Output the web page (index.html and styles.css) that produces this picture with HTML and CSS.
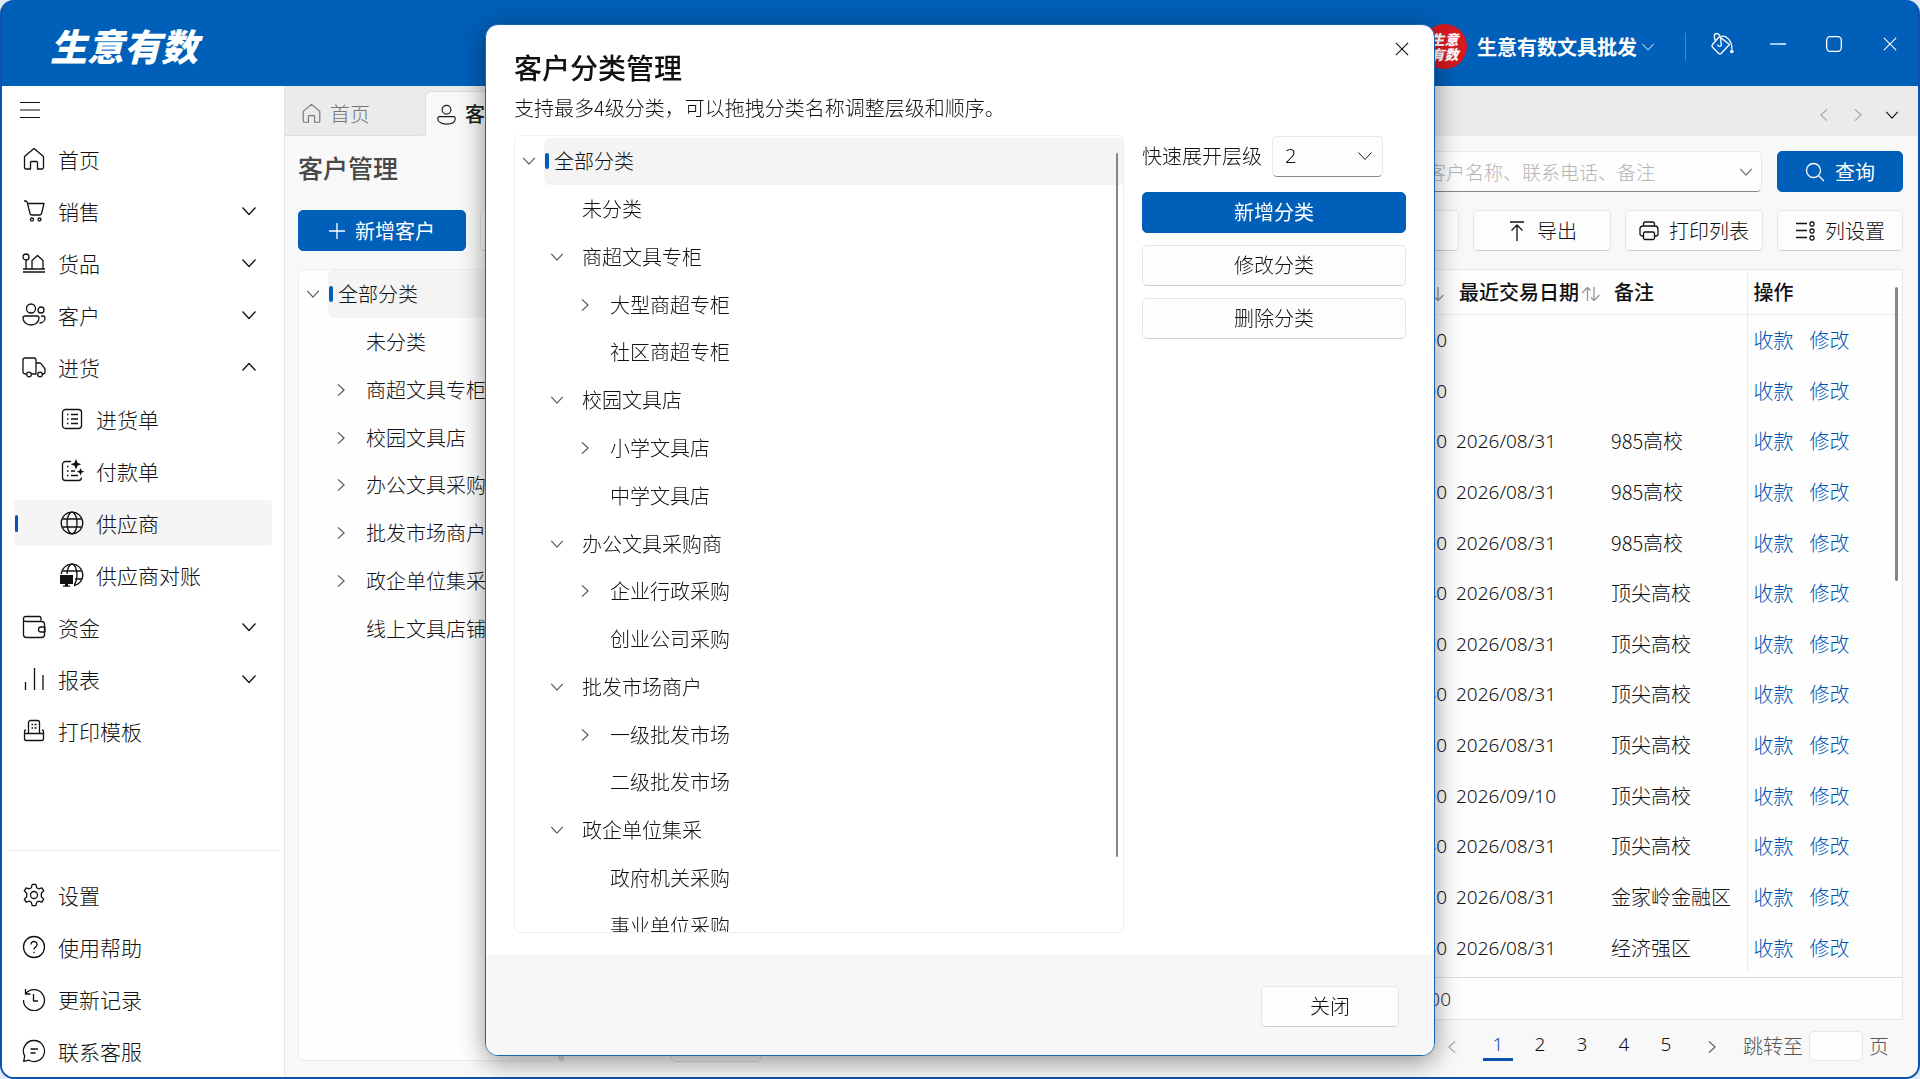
FILE: index.html
```html
<!DOCTYPE html>
<html lang="zh-CN">
<head>
    <meta charset="UTF-8">
    <meta name="viewport" content="width=device-width, initial-scale=1.0">
    <title>客户分类管理</title>
    <link rel="stylesheet" href="styles.css">
</head>
<body>
<svg class="sprite" aria-hidden="true">
    <symbol id="i-menu" viewBox="0 0 24 24"><path d="M2 4.500h20M2 12h20M2 19.500h20"/></symbol>
    <symbol id="i-home" viewBox="0 0 24 24"><path d="M2.500 9.500 12 1.500l9.500 8V20.500a1.500 1.500 0 0 1-1.500 1.500h-4.500v-6.500a1 1 0 0 0-1-1h-5a1 1 0 0 0-1 1V22H4a1.500 1.500 0 0 1-1.500-1.500z"/></symbol>
    <symbol id="i-cart" viewBox="0 0 24 24"><path d="M2 2h1.500c1 0 1.500.7 1.800 1.700L8 14.500c.3 1 1 1.500 2 1.500h7.500c1 0 1.700-.5 2-1.500L22 4.500H5.500"/><circle cx="10" cy="20.500" r="1.500"/><circle cx="17.500" cy="20.500" r="1.500"/></symbol>
    <symbol id="i-goods" viewBox="0 0 24 24"><circle cx="4" cy="6" r="3"/><path d="M4 9v9M1 18h22M1 21h22M10 18v-8.500l5.500-5 5.500 5V18"/></symbol>
    <symbol id="i-users" viewBox="0 0 24 24"><circle cx="9" cy="5.500" r="4.500"/><circle cx="19" cy="7" r="3"/><path d="M3 13h12a2 2 0 0 1 2 2c0 4-3.500 7-8 7s-8-3-8-7a2 2 0 0 1 2-2zM19 13h2.500a2 2 0 0 1 1.500 2c0 3-2.500 5-5.500 5"/></symbol>
    <symbol id="i-user" viewBox="0 0 24 24"><circle cx="12" cy="6.500" r="5"/><path d="M4 14.500h16a2 2 0 0 1 2 2c0 4-4 6.500-10 6.500S2 20.500 2 16.500a2 2 0 0 1 2-2z"/></symbol>
    <symbol id="i-truck" viewBox="0 0 24 24"><path d="M4.500 19H3a2 2 0 0 1-2-2V5a2 2 0 0 1 2-2h9a2 2 0 0 1 2 2v14H9.500M14 8h3.500a2 2 0 0 1 1.500.7l3.500 4.500a2 2 0 0 1 .5 1.300V17a2 2 0 0 1-2 2h-1"/><circle cx="7" cy="19.500" r="2.300"/><circle cx="18" cy="19.500" r="2.300"/></symbol>
    <symbol id="i-list" viewBox="0 0 24 24"><rect x="2.500" y="2.500" width="19" height="19" rx="3"/><path d="M7 7.500h1.500M11 7.500h7M7 12h1.500M11 12h7M7 16.500h1.500M11 16.500h7"/></symbol>
    <symbol id="i-pay" viewBox="0 0 24 24"><path d="M11 2.500H5.500a3 3 0 0 0-3 3v13a3 3 0 0 0 3 3h13a3 3 0 0 0 3-3M7 7.500h1.500M7 12h1.500M11 12h4M7 16.500h1.500M11 16.500h7"/><path class="solid" d="m16 0 1.500 3.800 3.800 1.500-3.800 1.500-1.500 3.800-1.500-3.800-3.800-1.500 3.800-1.500zM20.500 9l1.100 2.600 2.600 1.100-2.600 1.100-1.100 2.600-1.100-2.600-2.600-1.100 2.600-1.100z"/></symbol>
    <symbol id="i-globe" viewBox="0 0 24 24"><circle cx="12" cy="12" r="10.800"/><ellipse cx="12" cy="12" rx="5" ry="10.800"/><path d="M2.500 8h19M2.500 16h19"/></symbol>
    <symbol id="i-globe-pc" viewBox="0 0 24 24"><circle cx="12" cy="12" r="10.800"/><ellipse cx="12" cy="12" rx="5" ry="10.800"/><path d="M2.500 8h19M15 16h7"/><path class="mask" d="M0 11h14v13H0z"/><path class="solid" d="M0 12h13v9H0zM5 20h3v3H5zM3 22.500h7v1.300H3z"/></symbol>
    <symbol id="i-wallet" viewBox="0 0 24 24"><path d="M1.500 4v15.500a3 3 0 0 0 3 3h15a3 3 0 0 0 3-3v-10a3 3 0 0 0-3-3H3.500a2 2 0 0 1-2-2V3.500a2 2 0 0 1 2-2H17a2 2 0 0 1 2 2v3M23 12h-4a2.500 2.500 0 0 0 0 5h4z"/></symbol>
    <symbol id="i-chart" viewBox="0 0 24 24"><path d="M3.500 15v8M12.500 1v22M21 8v15"/></symbol>
    <symbol id="i-template" viewBox="0 0 24 24"><path d="M6.500 14.500v-11a2 2 0 0 1 2-2h7a2 2 0 0 1 2 2v11M4 11a1.500 1.500 0 0 0-1.500 1.500v7a2 2 0 0 0 2 2h15a2 2 0 0 0 2-2v-7A1.500 1.500 0 0 0 20 11M2.500 14.500h19M9.500 5.500H11M12.500 5.500h2M9.500 9H11M12.500 9h2"/></symbol>
    <symbol id="i-gear" viewBox="0 0 24 24"><circle cx="12" cy="12" r="3.500"/><path d="M10.200 1.300h3.600l.8 3.400 2 1.100 3.300-1 1.800 3.100L19.300 10.300v3.400l2.400 2.400-1.800 3.100-3.300-1-2 1.100-.8 3.400h-3.600l-.8-3.400-2-1.100-3.300 1-1.800-3.100 2.400-2.400v-3.400L2.300 7.900l1.800-3.100 3.300 1 2-1.100z"/></symbol>
    <symbol id="i-help" viewBox="0 0 24 24"><circle cx="12" cy="12" r="10.500"/><path d="M9 9.500a3 3 0 1 1 4.500 2.600c-1 .6-1.500 1.200-1.500 2.400M12 16.800v1.400"/></symbol>
    <symbol id="i-history" viewBox="0 0 24 24"><path d="M3.500 2v5h5M3.500 7A10.500 10.500 0 1 1 1.500 13M11.500 7v7H16"/></symbol>
    <symbol id="i-chat" viewBox="0 0 24 24"><path d="M12 1.500A10.500 10.500 0 1 1 7 21.200L1.700 22.300 2.700 17A10.500 10.500 0 0 1 12 1.500zM8.500 10h7.500M8.500 14h5"/></symbol>
    <symbol id="i-down" viewBox="0 0 16 16"><path d="m1.500 4.500 6.500 7 6.500-7"/></symbol>
    <symbol id="i-up" viewBox="0 0 16 16"><path d="m1.500 11.500 6.500-7 6.500 7"/></symbol>
    <symbol id="i-right" viewBox="0 0 16 16"><path d="m4.500 1.500 7 6.500-7 6.500"/></symbol>
    <symbol id="i-left" viewBox="0 0 16 16"><path d="m11.500 1.500-7 6.500 7 6.500"/></symbol>
    <symbol id="i-plus" viewBox="0 0 16 16"><path d="M8 0v16M0 8h16"/></symbol>
    <symbol id="i-close" viewBox="0 0 16 16"><path d="m1 1 14 14M15 1 1 15"/></symbol>
    <symbol id="i-min" viewBox="0 0 16 16"><path d="M0 8h16"/></symbol>
    <symbol id="i-max" viewBox="0 0 16 16"><rect x=".7" y=".7" width="14.600" height="14.600" rx="3.500"/></symbol>
    <symbol id="i-bucket" viewBox="0 0 24 24"><path d="M9 5 2.500 12.500a2 2 0 0 0 0 2.700l6 6a2 2 0 0 0 2.800 0l8.200-8.700L9.500 4.700M5.500 9C3.500 5 4 1.500 6.500 1.500c3 0 4.500 4.500 4.500 9.500a2 2 0 1 1-3.500 1.500M11 4.500c5-2 11 4 11 13"/><circle class="solid" cx="21.800" cy="19.500" r="1.800"/></symbol>
    <symbol id="i-search" viewBox="0 0 20 20"><circle cx="8.500" cy="8.500" r="7"/><path d="m13.500 13.500 5.500 5.500"/></symbol>
    <symbol id="i-export" viewBox="0 0 20 20"><path d="M3 1h14M10 20V4M4.500 9.500 10 4l5.500 5.500"/></symbol>
    <symbol id="i-print" viewBox="0 0 20 20"><path d="M4.500 15H3a2 2 0 0 1-2-2V8a3 3 0 0 1 3-3h12a3 3 0 0 1 3 3v5a2 2 0 0 1-2 2h-1.500M4.500 5V3a2 2 0 0 1 2-2h7a2 2 0 0 1 2 2v2"/><rect x="4.500" y="11" width="11" height="7.500" rx="1.500"/></symbol>
    <symbol id="i-columns" viewBox="0 0 20 20"><path d="M1 2.500h11M1 9.500h11M1 16.500h11"/><rect x="15" y="1" width="4" height="4" rx="1.500"/><rect x="15" y="8" width="4" height="4" rx="1.500"/><rect x="15" y="15" width="4" height="4" rx="1.500"/></symbol>
    <symbol id="i-sort" viewBox="0 0 20 16"><path d="M1 7 6.500 1.500 9.500 4.500M6.500 15V1.500M13 1v13.500M10 11.500l3 3L18.500 9"/></symbol>
</svg>

<div class="window">
    <header class="titlebar">
        <h1 class="logo">生意有数</h1>
        <div class="avatar">生意<br>有数</div>
        <button class="account" type="button">生意有数文具批发 <svg class="chev"><use href="#i-down"/></svg></button>
        <div class="window-buttons">
            <button type="button"><svg class="icon"><use href="#i-bucket"/></svg></button>
            <button type="button"><svg class="chev"><use href="#i-min"/></svg></button>
            <button type="button"><svg class="chev"><use href="#i-max"/></svg></button>
            <button type="button"><svg class="chev small"><use href="#i-close"/></svg></button>
        </div>
    </header>

    <div class="layout">
        <aside class="sidebar">
            <button class="menu-toggle" type="button"><svg class="icon thin"><use href="#i-menu"/></svg></button>
            <nav>
                <ul class="menu">
                    <li><a href="#"><svg class="icon"><use href="#i-home"/></svg>首页</a></li>
                    <li><a href="#"><svg class="icon"><use href="#i-cart"/></svg>销售<svg class="chev"><use href="#i-down"/></svg></a></li>
                    <li><a href="#"><svg class="icon"><use href="#i-goods"/></svg>货品<svg class="chev"><use href="#i-down"/></svg></a></li>
                    <li><a href="#"><svg class="icon"><use href="#i-users"/></svg>客户<svg class="chev"><use href="#i-down"/></svg></a></li>
                    <li>
                        <a href="#"><svg class="icon"><use href="#i-truck"/></svg>进货<svg class="chev"><use href="#i-up"/></svg></a>
                        <ul class="menu submenu">
                            <li><a href="#"><svg class="icon"><use href="#i-list"/></svg>进货单</a></li>
                            <li><a href="#"><svg class="icon"><use href="#i-pay"/></svg>付款单</a></li>
                            <li><a href="#" class="active"><svg class="icon"><use href="#i-globe"/></svg>供应商</a></li>
                            <li><a href="#"><svg class="icon"><use href="#i-globe-pc"/></svg>供应商对账</a></li>
                        </ul>
                    </li>
                    <li><a href="#"><svg class="icon"><use href="#i-wallet"/></svg>资金<svg class="chev"><use href="#i-down"/></svg></a></li>
                    <li><a href="#"><svg class="icon"><use href="#i-chart"/></svg>报表<svg class="chev"><use href="#i-down"/></svg></a></li>
                    <li><a href="#"><svg class="icon"><use href="#i-template"/></svg>打印模板</a></li>
                </ul>
            </nav>
            <ul class="menu menu-bottom">
                <li><a href="#"><svg class="icon"><use href="#i-gear"/></svg>设置</a></li>
                <li><a href="#"><svg class="icon"><use href="#i-help"/></svg>使用帮助</a></li>
                <li><a href="#"><svg class="icon"><use href="#i-history"/></svg>更新记录</a></li>
                <li><a href="#"><svg class="icon"><use href="#i-chat"/></svg>联系客服</a></li>
            </ul>
        </aside>

        <div class="main">
            <div class="tabs">
                <a href="#" class="tab"><svg class="icon tab-icon"><use href="#i-home"/></svg>首页</a>
                <a href="#" class="tab active"><svg class="icon tab-icon"><use href="#i-user"/></svg>客户管理</a>
                <div class="tab-arrows">
                    <button type="button" disabled><svg class="chev small"><use href="#i-left"/></svg></button>
                    <button type="button" disabled><svg class="chev small"><use href="#i-right"/></svg></button>
                    <button type="button"><svg class="chev small"><use href="#i-down"/></svg></button>
                </div>
            </div>

            <main class="content">
                <div class="row">
                    <h2 class="page-title">客户管理</h2>
                    <div class="search">
                        <input type="text" placeholder="客户名称、联系电话、备注" aria-label="客户名称、联系电话、备注">
                        <svg class="chev small"><use href="#i-down"/></svg>
                    </div>
                    <button class="btn primary narrow" type="button"><svg class="btn-icon"><use href="#i-search"/></svg>查询</button>
                </div>
                <div class="row">
                    <button class="btn primary add" type="button"><svg class="chev"><use href="#i-plus"/></svg>新增客户</button>
                    <button class="btn" type="button"></button>
                    <span class="spacer"></span>
                    <button class="btn" type="button"></button>
                    <button class="btn" type="button"><svg class="btn-icon"><use href="#i-export"/></svg>导出</button>
                    <button class="btn" type="button"><svg class="btn-icon"><use href="#i-print"/></svg>打印列表</button>
                    <button class="btn narrow" type="button"><svg class="btn-icon"><use href="#i-columns"/></svg>列设置</button>
                </div>

                <div class="panels">
                    <div class="side-tree">
                        <ul class="tree">
                            <li class="selected"><svg class="chev small"><use href="#i-down"/></svg><span>全部分类</span></li>
                            <li class="l2"><span>未分类</span></li>
                            <li class="l2"><svg class="chev small"><use href="#i-right"/></svg><span>商超文具专柜</span></li>
                            <li class="l2"><svg class="chev small"><use href="#i-right"/></svg><span>校园文具店</span></li>
                            <li class="l2"><svg class="chev small"><use href="#i-right"/></svg><span>办公文具采购商</span></li>
                            <li class="l2"><svg class="chev small"><use href="#i-right"/></svg><span>批发市场商户</span></li>
                            <li class="l2"><svg class="chev small"><use href="#i-right"/></svg><span>政企单位集采</span></li>
                            <li class="l2"><span>线上文具店铺</span></li>
                        </ul>
                    </div>
                    <div class="splitter"></div>
                    <div class="list">
                        <div class="table-card">
                            <div class="table-wrap">
                                <table>
                                    <colgroup><col><col class="c-date"><col class="c-note"><col class="c-op"></colgroup>
                                    <thead>
                                        <tr>
                                            <th class="num"><svg class="sort"><use href="#i-sort"/></svg></th>
                                            <th>最近交易日期<svg class="sort"><use href="#i-sort"/></svg></th>
                                            <th>备注</th>
                                            <th class="op">操作</th>
                                        </tr>
                                    </thead>
                                    <tbody>
                                        <tr><td class="num">00</td><td class="date"></td><td></td><td class="op"><a href="#">收款</a><a href="#">修改</a></td></tr>
                                        <tr><td class="num">00</td><td class="date"></td><td></td><td class="op"><a href="#">收款</a><a href="#">修改</a></td></tr>
                                        <tr><td class="num">20</td><td class="date">2026/08/31</td><td>985高校</td><td class="op"><a href="#">收款</a><a href="#">修改</a></td></tr>
                                        <tr><td class="num">70</td><td class="date">2026/08/31</td><td>985高校</td><td class="op"><a href="#">收款</a><a href="#">修改</a></td></tr>
                                        <tr><td class="num">10</td><td class="date">2026/08/31</td><td>985高校</td><td class="op"><a href="#">收款</a><a href="#">修改</a></td></tr>
                                        <tr><td class="num">40</td><td class="date">2026/08/31</td><td>顶尖高校</td><td class="op"><a href="#">收款</a><a href="#">修改</a></td></tr>
                                        <tr><td class="num">20</td><td class="date">2026/08/31</td><td>顶尖高校</td><td class="op"><a href="#">收款</a><a href="#">修改</a></td></tr>
                                        <tr><td class="num">60</td><td class="date">2026/08/31</td><td>顶尖高校</td><td class="op"><a href="#">收款</a><a href="#">修改</a></td></tr>
                                        <tr><td class="num">80</td><td class="date">2026/08/31</td><td>顶尖高校</td><td class="op"><a href="#">收款</a><a href="#">修改</a></td></tr>
                                        <tr><td class="num">90</td><td class="date">2026/09/10</td><td>顶尖高校</td><td class="op"><a href="#">收款</a><a href="#">修改</a></td></tr>
                                        <tr><td class="num">60</td><td class="date">2026/08/31</td><td>顶尖高校</td><td class="op"><a href="#">收款</a><a href="#">修改</a></td></tr>
                                        <tr><td class="num">20</td><td class="date">2026/08/31</td><td>金家岭金融区</td><td class="op"><a href="#">收款</a><a href="#">修改</a></td></tr>
                                        <tr><td class="num">60</td><td class="date">2026/08/31</td><td>经济强区</td><td class="op"><a href="#">收款</a><a href="#">修改</a></td></tr>
                                    </tbody>
                                </table>
                                <div class="thumb table-thumb"></div>
                            </div>
                            <div class="total"><span>00</span></div>
                        </div>
                        <div class="pager">
                            <button class="page-size" type="button"></button>
                            <button class="arrow" type="button" disabled><svg class="chev small"><use href="#i-left"/></svg></button>
                            <div class="pages">
                                <button type="button" class="current">1</button>
                                <button type="button">2</button>
                                <button type="button">3</button>
                                <button type="button">4</button>
                                <button type="button">5</button>
                            </div>
                            <button class="arrow" type="button"><svg class="chev small"><use href="#i-right"/></svg></button>
                            <label for="jump">跳转至</label>
                            <input type="text" id="jump">
                            <span class="unit">页</span>
                        </div>
                    </div>
                </div>
            </main>
        </div>
    </div>
</div>

<div class="overlay">
    <section class="dialog" role="dialog" aria-labelledby="dialog-title">
        <button class="dialog-close" type="button"><svg class="chev small"><use href="#i-close"/></svg></button>
        <h2 id="dialog-title">客户分类管理</h2>
        <p>支持最多4级分类，可以拖拽分类名称调整层级和顺序。</p>
        <div class="dialog-body">
            <div class="tree-box">
                <ul class="tree">
                    <li class="selected"><svg class="chev small"><use href="#i-down"/></svg><span>全部分类</span></li>
                    <li class="l2"><span>未分类</span></li>
                    <li class="l2"><svg class="chev small"><use href="#i-down"/></svg><span>商超文具专柜</span></li>
                    <li class="l3"><svg class="chev small"><use href="#i-right"/></svg><span>大型商超专柜</span></li>
                    <li class="l3"><span>社区商超专柜</span></li>
                    <li class="l2"><svg class="chev small"><use href="#i-down"/></svg><span>校园文具店</span></li>
                    <li class="l3"><svg class="chev small"><use href="#i-right"/></svg><span>小学文具店</span></li>
                    <li class="l3"><span>中学文具店</span></li>
                    <li class="l2"><svg class="chev small"><use href="#i-down"/></svg><span>办公文具采购商</span></li>
                    <li class="l3"><svg class="chev small"><use href="#i-right"/></svg><span>企业行政采购</span></li>
                    <li class="l3"><span>创业公司采购</span></li>
                    <li class="l2"><svg class="chev small"><use href="#i-down"/></svg><span>批发市场商户</span></li>
                    <li class="l3"><svg class="chev small"><use href="#i-right"/></svg><span>一级批发市场</span></li>
                    <li class="l3"><span>二级批发市场</span></li>
                    <li class="l2"><svg class="chev small"><use href="#i-down"/></svg><span>政企单位集采</span></li>
                    <li class="l3"><span>政府机关采购</span></li>
                    <li class="l3"><span>事业单位采购</span></li>
                </ul>
                <div class="thumb"></div>
            </div>
            <div class="actions">
                <div class="level">
                    <label for="level">快速展开层级</label>
                    <div class="select">
                        <select id="level">
                            <option>2</option>
                        </select>
                        <svg class="chev"><use href="#i-down"/></svg>
                    </div>
                </div>
                <button class="btn primary" type="button">新增分类</button>
                <button class="btn" type="button">修改分类</button>
                <button class="btn" type="button">删除分类</button>
            </div>
        </div>
        <footer>
            <button class="btn" type="button">关闭</button>
        </footer>
    </section>
</div>
</body>
</html>
```
FILE: styles.css
```css
* {
    box-sizing: border-box;
}

body {
    margin: 0;
    background-color: #dfe9f2;
    color: #111;
    font-family: "Noto Sans CJK SC", "Noto Sans", sans-serif;
    font-size: 20px;
    font-weight: 300;
    line-height: 28px;
}

h1, h2, p, ul {
    margin: 0;
    padding: 0;
}

ul {
    list-style-type: none;
}

a {
    color: inherit;
    text-decoration: none;
}

button, input, select {
    font: inherit;
    color: inherit;
    margin: 0;
    padding: 0;
    border: none;
    background: none;
}

/* icons */
.sprite {
    position: absolute;
    width: 0;
    height: 0;
}

svg {
    flex: none;
    fill: none;
    stroke: currentColor;
    stroke-width: 1.3;
    stroke-linejoin: round;
}

.solid {
    fill: currentColor;
    stroke: none;
}

.mask {
    fill: #fff;
    stroke: none;
}

.icon {
    width: 24px;
    height: 24px;
}

.thin {
    stroke-width: 1;
}

.tab-icon {
    width: 21px;
    height: 21px;
}

.btn-icon {
    width: 20px;
    height: 20px;
}

.chev {
    width: 16px;
    height: 16px;
}

.chev.small {
    width: 14px;
    height: 14px;
}

/* window */
.window {
    display: flex;
    flex-direction: column;
    height: 100vh;
    border: 2px solid #0b52b0;
    border-top: none;
    border-radius: 14px;
    overflow: hidden;
    background-color: #005fb8;
}

.titlebar {
    display: flex;
    align-items: center;
    height: 86px;
    padding-top: 7px;
    color: #fff;
}

.logo {
    margin: 0 auto 0 48px;
    padding-bottom: 4px;
    font-size: 37px;
    font-style: italic;
    font-weight: 900;
    line-height: 48px;
}

.avatar {
    width: 45px;
    height: 45px;
    padding-top: 8px;
    margin-right: 10px;
    border-radius: 50%;
    background-color: #d71920;
    font-size: 14px;
    font-style: italic;
    font-weight: 900;
    line-height: 15px;
    text-align: center;
}

.account {
    display: flex;
    align-items: center;
    gap: 4px;
    padding-right: 30px;
    border-right: 1px solid #3f88cb;
    font-weight: 700;
}

.account .chev {
    width: 14px;
    stroke-width: 1;
}

.window-buttons {
    display: flex;
    margin-left: 8px;
    padding-bottom: 5px;
}

.window-buttons button {
    display: flex;
    align-items: center;
    justify-content: center;
    width: 56px;
    height: 40px;
}

.layout {
    display: flex;
    flex: 1;
    min-height: 0;
    background-color: #f8f8f8;
}

/* sidebar */
.sidebar {
    display: flex;
    flex-direction: column;
    width: 283px;
    border-right: 1px solid #e3e3e3;
    background-color: #fff;
}

.menu-toggle {
    display: flex;
    align-items: center;
    height: 47px;
    padding-left: 16px;
}

.menu li {
    padding: 3px 0;
}

.menu li:has(.submenu) {
    padding-bottom: 0;
}

.menu a {
    display: flex;
    align-items: center;
    gap: 12px;
    height: 46px;
    margin: 0 12px;
    padding-left: 8px;
    border-radius: 4px;
    font-size: 21px;
}

.menu .chev {
    margin-left: auto;
    margin-right: 15px;
}

.submenu {
    padding-top: 3px;
}

.submenu a {
    padding-left: 46px;
}

.menu .active {
    position: relative;
    background-color: #f5f5f5;
}

.menu .active::before {
    content: "";
    position: absolute;
    left: 1px;
    width: 3px;
    height: 17px;
    border-radius: 2px;
    background-color: #0b4fb8;
}

.menu-bottom {
    margin: auto 4px 0 6px;
    padding-top: 18px;
    border-top: 1px solid #ececec;
}

.menu-bottom a {
    margin-left: 6px;
}

/* tabs */
.main {
    display: flex;
    flex-direction: column;
    flex: 1;
    min-width: 0;
}

.tabs {
    display: flex;
    height: 50px;
    background-color: #ebebeb;
}

.tab {
    display: flex;
    align-items: center;
    gap: 8px;
    width: 140px;
    padding-left: 16px;
    border-bottom: 1px solid #dcdcdc;
    border-radius: 0 0 6px 0;
    color: #767676;
}

.tab:first-child {
    padding-top: 6px;
}

.tab.active {
    width: 230px;
    margin-top: 5px;
    padding-left: 10px;
    border: 1px solid #dedede;
    border-bottom: none;
    border-radius: 6px 6px 0 0;
    background-color: #f8f8f8;
    color: #1b1b1b;
    font-weight: 500;
}

.tab-arrows {
    display: flex;
    margin-left: auto;
    padding: 6px 9px 0 0;
}

.tab-arrows button {
    width: 34px;
}

button:disabled {
    color: #a8a8a8;
}

/* content */
.content {
    display: flex;
    flex-direction: column;
    flex: 1;
    gap: 18px;
    min-height: 0;
    padding: 15px 15px 6px 13px;
}

.row {
    display: flex;
    gap: 14px;
    height: 41px;
}

.spacer {
    flex: 1;
}

.page-title {
    margin-right: auto;
    color: #484848;
    font-size: 25px;
    font-weight: 500;
    line-height: 32px;
}

.search, .select {
    display: flex;
    align-items: center;
    border: 1px solid #e8e8e8;
    border-bottom-color: #868686;
    border-radius: 5px;
    background-color: #fdfdfd;
}

.search {
    width: 348px;
    margin-right: 1px;
    padding: 0 8px 0 12px;
    color: #666;
    font-size: 19px;
}

.search input {
    flex: 1;
    min-width: 0;
    outline: none;
}

.search input::placeholder {
    color: #b4b4b4;
}

.btn {
    display: flex;
    align-items: center;
    justify-content: center;
    gap: 10px;
    width: 138px;
    height: 41px;
    border: 1px solid #e6e6e6;
    border-bottom-color: #cdcdcd;
    border-radius: 5px;
    background-color: #fdfdfd;
}

.btn.primary {
    border-color: #005fb8;
    background-color: #005fb8;
    color: #fff;
    font-weight: 400;
}

.btn.narrow {
    width: 126px;
}

.btn.add {
    width: 168px;
}

.panels {
    display: flex;
    flex: 1;
    min-height: 0;
}

.side-tree {
    width: 257px;
    height: calc(100% - 10px);
    border: 1px solid #ececec;
    border-radius: 6px;
    background-color: #fefefe;
    overflow: hidden;
}

.side-tree .tree {
    height: 383px;
}

.splitter {
    width: 6px;
    height: calc(100% - 10px);
    margin: 0 3px;
    border-radius: 3px;
    background-color: #d8d8d8;
}

/* tree */
.tree {
    display: flex;
    flex-direction: column;
}

.tree li {
    display: flex;
    flex: 1;
    align-items: center;
    justify-content: flex-end;
    white-space: nowrap;
}

.tree .l2 {
    padding-left: 28px;
}

.tree .l3 {
    padding-left: 56px;
}

.tree .chev {
    margin: 0 8px 0 7px;
    stroke: #555;
}

.tree span {
    display: flex;
    align-items: center;
    align-self: stretch;
    flex: 1;
    padding-left: 10px;
    border-radius: 6px 0 0 6px;
}

.tree span:first-child {
    margin-left: 29px;
}

.tree .selected span {
    position: relative;
    background-color: #f4f4f4;
}

.tree .selected span::before {
    content: "";
    position: absolute;
    left: 1px;
    width: 4px;
    height: 16px;
    border-radius: 2px;
    background-color: #005fb8;
}

.thumb {
    position: absolute;
    top: 17px;
    right: 5px;
    width: 2px;
    height: 704px;
    border-radius: 2px;
    background-color: #868686;
}

.table-thumb {
    right: 4px;
    width: 3px;
    height: 294px;
}

/* table */
.list {
    display: flex;
    flex-direction: column;
    flex: 1;
    min-width: 0;
}

.table-card {
    display: flex;
    flex-direction: column;
    flex: 1;
    min-height: 0;
    border: 1px solid #e8e8e8;
    background-color: #fefefe;
}

.table-wrap {
    position: relative;
    flex: 1;
    min-height: 0;
    padding-bottom: 4px;
}

table {
    width: 100%;
    height: 100%;
    border-collapse: collapse;
    table-layout: fixed;
}

.c-date {
    width: 155px;
}

.c-note {
    width: 143px;
}

.c-op {
    width: 155px;
}

th {
    height: 44px;
    padding: 0 0 0 10px;
    border-bottom: 1px solid #ececec;
    font-weight: 500;
    text-align: left;
    white-space: nowrap;
}

td {
    padding: 0 0 0 7px;
    white-space: nowrap;
}

.num {
    padding-right: 2px;
    text-align: right;
}

.date, td.num, .total, .pages {
    font-family: "Noto Sans", sans-serif;
    font-size: 19px;
}

.op {
    padding-left: 6px;
    border-left: 1px solid #ececec;
}

.op a {
    margin-right: 16px;
    color: #0054b0;
}

.sort {
    width: 20px;
    height: 16px;
    margin: 0 2px;
    stroke: #949494;
    vertical-align: -2px;
}

.total {
    height: 42px;
    padding-right: 451px;
    border-top: 1px solid #dedede;
    color: #333;
    line-height: 42px;
    text-align: right;
}

/* pager */
.pager {
    display: flex;
    align-items: center;
    height: 51px;
    padding-right: 14px;
    color: #555;
}

.page-size {
    width: 90px;
    height: 32px;
    margin: 0 auto 0 104px;
    border: 1px solid #dcdcdc;
    border-radius: 5px;
}

.pager .arrow {
    width: 24px;
    height: 30px;
    margin: 0 19px;
}

.pages {
    display: flex;
    gap: 12px;
    color: #111;
}

.pages button {
    width: 30px;
    height: 31px;
    border-bottom: 3px solid transparent;
}

.pages .current {
    border-color: #0b52b0;
    color: #0b52b0;
}

.pager input {
    width: 54px;
    height: 30px;
    margin: 0 6px;
    border: 1px solid #e6e6e6;
    border-radius: 5px;
    background-color: #fefefe;
}

/* dialog */
.overlay {
    position: fixed;
    inset: 0;
    display: grid;
    place-items: center;
}

.dialog {
    position: relative;
    display: flex;
    flex-direction: column;
    width: 950px;
    height: calc(100vh - 47px);
    padding-top: 24px;
    border: 1px solid #1565b5;
    border-radius: 13px;
    background-color: #fff;
    box-shadow: 0 6px 26px rgba(0, 0, 0, 0.42);
    overflow: hidden;
}

.dialog h2 {
    margin: 0 28px 9px;
    font-size: 28px;
    font-weight: 500;
    line-height: 36px;
}

.dialog p {
    margin: 0 28px 13px;
}

.dialog-close {
    position: absolute;
    top: 12px;
    right: 20px;
    width: 24px;
    height: 24px;
    line-height: 0;
}

.dialog-body {
    display: flex;
    flex: 1;
    gap: 18px;
    min-height: 0;
    padding: 0 28px 22px;
}

.tree-box {
    position: relative;
    flex: 1;
    border: 1px solid #efefef;
    border-radius: 6px;
    overflow: hidden;
}

.tree-box .tree {
    height: 814px;
    padding-top: 2px;
}

.actions {
    display: flex;
    flex-direction: column;
    gap: 12px;
    width: 264px;
    padding-top: 1px;
}

.actions .btn {
    width: 100%;
}

.level {
    display: flex;
    align-items: center;
    gap: 10px;
    height: 41px;
    margin-bottom: 3px;
}

.select {
    position: relative;
    width: 111px;
    height: 41px;
}

.select select {
    width: 100%;
    height: 100%;
    padding-left: 12px;
    appearance: none;
    font-family: "Noto Sans", sans-serif;
}

.select .chev {
    position: absolute;
    right: 9px;
    stroke-width: 1;
    pointer-events: none;
}

.dialog footer {
    display: flex;
    align-items: center;
    justify-content: flex-end;
    height: 100px;
    padding: 3px 35px 0 0;
    background-color: #f7f7f7;
}
```
